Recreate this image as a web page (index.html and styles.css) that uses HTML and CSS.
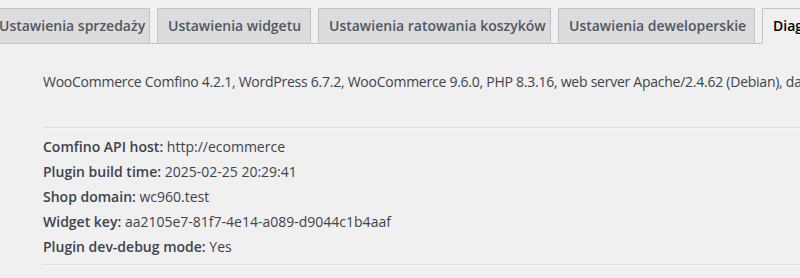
FILE: index.html
```html
<!DOCTYPE html>
<html lang="pl">
<head>
    <meta charset="UTF-8">
    <meta name="viewport" content="width=device-width, initial-scale=1.0">
    <title>Comfino - Diagnostyka</title>
    <link rel="stylesheet" href="styles.css">
</head>
<body>
    <nav class="nav-tab-wrapper">
        <a class="nav-tab tab-sales" href="#">Ustawienia sprzedaży</a>
        <a class="nav-tab tab-widget" href="#">Ustawienia widgetu</a>
        <a class="nav-tab tab-carts" href="#">Ustawienia ratowania koszyków</a>
        <a class="nav-tab tab-dev" href="#">Ustawienia deweloperskie</a>
        <a class="nav-tab nav-tab-active" href="#">Diagnostyka</a>
    </nav>

    <div class="diagnostics">
        <p class="env-info">WooCommerce Comfino 4.2.1, WordPress 6.7.2, WooCommerce 9.6.0, PHP 8.3.16, web server Apache/2.4.62 (Debian), database MariaDB 10.11.6</p>
        <hr>
        <div class="info-list">
            <div class="info-row"><b>Comfino API host:</b> http://ecommerce</div>
            <div class="info-row"><b>Plugin build time:</b> 2025-02-25 20:29:41</div>
            <div class="info-row"><b>Shop domain:</b> wc960.test</div>
            <div class="info-row"><b>Widget key:</b> aa2105e7-81f7-4e14-a089-d9044c1b4aaf</div>
            <div class="info-row"><b>Plugin dev-debug mode:</b> Yes</div>
        </div>
        <hr>
    </div>
</body>
</html>
```

FILE: styles.css
```css
html {
    overflow: hidden;
}
body {
    font-family: 'Open Sans', sans-serif;
    font-size: 14px;
    background-color: #f0f0f1;
    color: #3c434a;
    margin: 0;
    padding: 0;
}
.nav-tab-wrapper {
    display: flex;
    gap: 7px;
    margin-left: -12px;
    padding-top: 8px;
    border-bottom: 1px solid #c3c4c7;
    white-space: nowrap;
}
.nav-tab {
    box-sizing: border-box;
    flex: none;
    display: block;
    margin-bottom: -1px;
    padding: 5px 10px;
    line-height: 24px;
    font-weight: 600;
    text-align: center;
    text-decoration: none;
    color: #50575e;
    background: #dcdcde;
    border: 1px solid #c3c4c7;
}
.tab-sales {
    width: 162px;
}
.tab-widget {
    width: 154px;
}
.tab-carts {
    width: 233px;
}
.tab-dev {
    width: 197px;
}
.nav-tab-active {
    text-align: left;
    color: #000;
    background: #f0f0f1;
    border-bottom-color: #f0f0f1;
}
.diagnostics {
    padding-left: 43px;
    width: 1100px;
}
.env-info {
    margin: 25px 0 0;
    line-height: 25px;
    letter-spacing: -0.25px;
    white-space: nowrap;
}
hr {
    margin: 33px 0 5px;
    border: 0;
    border-top: 1px solid #dcdcde;
    border-bottom: 1px solid #f6f7f7;
}
.info-list {
    line-height: 25px;
}
.info-row b {
    font-weight: 600;
}
.info-list + hr {
    margin-top: 5px;
}
```
